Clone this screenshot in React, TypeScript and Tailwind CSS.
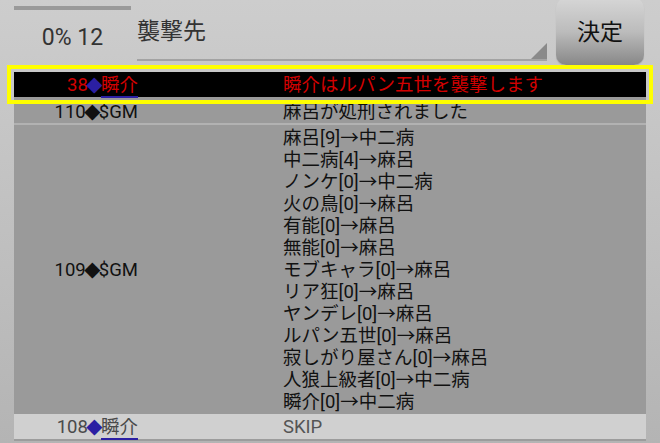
import React from "react";

const votes = [
  "麻呂[9]→中二病",
  "中二病[4]→麻呂",
  "ノンケ[0]→中二病",
  "火の鳥[0]→麻呂",
  "有能[0]→麻呂",
  "無能[0]→麻呂",
  "モブキャラ[0]→麻呂",
  "リア狂[0]→麻呂",
  "ヤンデレ[0]→麻呂",
  "ルパン五世[0]→麻呂",
  "寂しがり屋さん[0]→麻呂",
  "人狼上級者[0]→中二病",
  "瞬介[0]→中二病",
];

const font = { fontFamily: 'Roboto, "Noto Sans CJK JP", sans-serif' };

function Diamond({ className = "" }: { className?: string }) {
  return (
    <span className={`font-['DejaVu_Sans'] text-[21px] leading-none mx-[-1.5px] ${className}`}>◆</span>
  );
}

export default function App() {
  return (
    <div
      className="w-[660px] h-[443px] overflow-hidden bg-gradient-to-b from-[#cdcdcd] to-[#b4b4b4]"
      style={font}
    >
      {/* header: timer, target select, submit */}
      <div className="flex items-start h-[72px]">
        <div className="ml-[14px] w-[117px] flex flex-col">
          <div className="mt-[6px] h-[4px] bg-[#9a9a9a]"></div>
          <div className="mt-[14px] text-center text-[23px] leading-[28px] text-[#333]">0% 12</div>
        </div>
        <div className="relative ml-[6px] w-[410px] h-[61px] border-b-2 border-[#a3a3a3]">
          <div className="pt-[17px] text-[23px] leading-[30px] text-[#333]">襲撃先</div>
          <svg className="absolute right-0 bottom-0" width="16" height="16" viewBox="0 0 16 16">
            <polygon points="16,0 16,16 0,16" fill="#8a8a8a" />
          </svg>
        </div>
        <button className="ml-[9px] -mt-[2px] w-[88px] h-[67px] rounded-[10px] bg-gradient-to-b from-[#d6d6d6] via-[#bcbcbc] to-[#888888] flex items-center justify-center pt-[4px] text-[23px] text-[#111] shadow-[0_1px_1px_rgba(0,0,0,0.15)]">
          決定
        </button>
      </div>

      {/* log table */}
      <div className="mx-[14px] w-[632px] text-[18.5px]">
        <div className="relative flex items-center h-[25px] bg-black outline-4 outline-[#ffff00] outline-offset-3 text-[#d20000]">
          <div className="w-[124px] text-right leading-[22px]">
            38<Diamond className="text-[#2b1fa3]" />
            <span className="underline decoration-[#2b1fa3] decoration-2 underline-offset-[5px]">瞬介</span>
          </div>
          <div className="ml-[145px] leading-[22px]">瞬介はルパン五世を襲撃します</div>
        </div>
        <div className="flex items-start h-[26px] pt-[4px] bg-[#9a9a9a] text-[#111]">
          <div className="w-[124px] text-right leading-[22px]">
            110<Diamond />$GM
          </div>
          <div className="ml-[145px] leading-[22px]">麻呂が処刑されました</div>
        </div>
        <div className="h-[2px] bg-[#b2b2b2]"></div>
        <div className="flex items-center h-[289px] pt-[1px] bg-[#9a9a9a] text-[#111]">
          <div className="w-[124px] text-right leading-[22px]">
            109<Diamond />$GM
          </div>
          <div className="ml-[145px] flex flex-col">
            {votes.map((v) => (
              <div key={v} className="leading-[22px]">{v}</div>
            ))}
          </div>
        </div>
        <div className="flex items-center h-[25px] bg-[#d0d0d0] text-[#4a4a4a] border-b-2 border-[#9c9c9c] box-content">
          <div className="w-[124px] text-right leading-[22px]">
            108<Diamond className="text-[#2b1fa3]" />
            <span className="underline decoration-[#2b1fa3] decoration-2 underline-offset-[5px]">瞬介</span>
          </div>
          <div className="ml-[145px] leading-[22px] text-[#555]">SKIP</div>
        </div>
      </div>
    </div>
  );
}
